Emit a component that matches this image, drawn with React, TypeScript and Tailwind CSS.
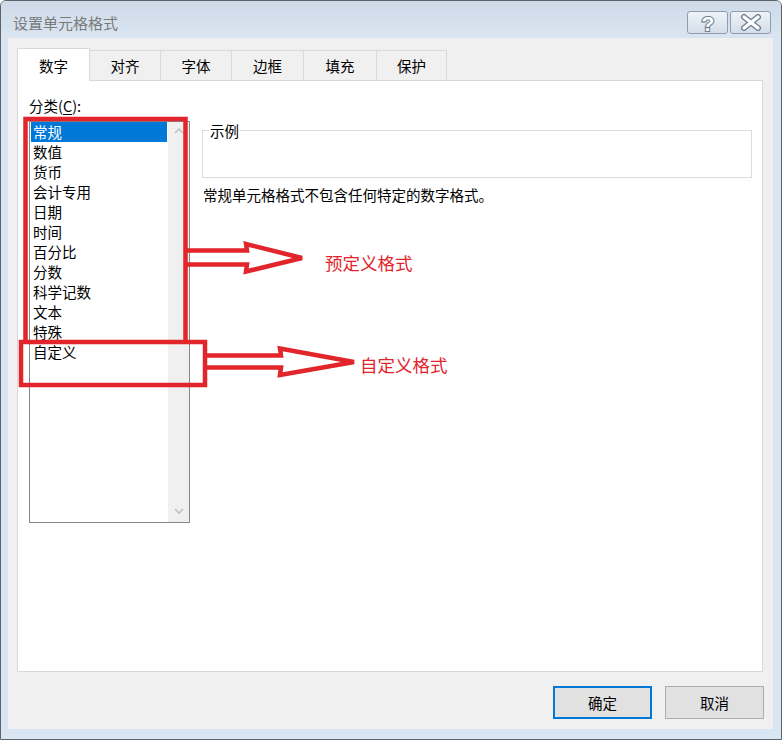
import React from 'react';

const tabs = [
  { label: '数字', w: 'w-[73px]' },
  { label: '对齐', w: 'w-[71px]' },
  { label: '字体', w: 'w-[71px]' },
  { label: '边框', w: 'w-[72px]' },
  { label: '填充', w: 'w-[73px]' },
  { label: '保护', w: 'w-[70px]' },
];

const categories = ['常规', '数值', '货币', '会计专用', '日期', '时间', '百分比', '分数', '科学记数', '文本', '特殊', '自定义'];

function HelpButton() {
  return (
    <div className="w-[41px] h-[23px] rounded-[3px] border border-[#8e9db0] bg-gradient-to-b from-[#eef3f8] to-[#d3deea] flex items-center justify-center">
      <svg width="18" height="22" viewBox="0 0 18 22">
        <text
          x="9"
          y="18.5"
          textAnchor="middle"
          fontSize="21"
          fontWeight="bold"
          fontFamily="Liberation Sans, sans-serif"
          fill="#ffffff"
          stroke="#6f7f91"
          strokeWidth="2.2"
          paintOrder="stroke"
        >
          ?
        </text>
      </svg>
    </div>
  );
}

function CloseButton() {
  return (
    <div className="w-[41px] h-[23px] rounded-[3px] border border-[#8e9db0] bg-gradient-to-b from-[#eef3f8] to-[#d3deea] flex items-center justify-center">
      <svg width="22" height="17" viewBox="0 0 22 17">
        <path d="M4 3 L18 14 M18 3 L4 14" stroke="#6f7f91" strokeWidth="6" strokeLinecap="round" />
        <path d="M4 3 L18 14 M18 3 L4 14" stroke="#ffffff" strokeWidth="3.4" strokeLinecap="round" />
      </svg>
    </div>
  );
}

function Chevron({ up }: { up?: boolean }) {
  return (
    <svg width="10" height="6" viewBox="0 0 10 6">
      <path d={up ? 'M1 5 L5 1 L9 5' : 'M1 1 L5 5 L9 1'} fill="none" stroke="#c0c0c0" strokeWidth="1.6" />
    </svg>
  );
}

function Annotations() {
  const red = '#e2242b';
  return (
    <>
      <svg className="absolute -left-px -top-px w-[782px] h-[740px] pointer-events-none" viewBox="0 0 782 740">
        <g fill="none" stroke={red} strokeWidth="4.5" strokeLinejoin="miter">
          <path d="M25.5 342 L25.5 119 L185.5 119 L185.5 342" />
          <rect x="21" y="342" width="184" height="43" />
          <path d="M187 250.5 L247 250.5 L246 244 L302 258 L246 271.5 L247 264.5 L187 264.5" />
          <path d="M207 355.5 L281 355.5 L280 348.5 L354 362 L280 375 L281 367.5 L207 367.5" />
        </g>
      </svg>
      <span className="absolute left-[324px] top-[250px] leading-[24px] text-[17.5px] text-[#e2242b] pointer-events-none">
        预定义格式
      </span>
      <span className="absolute left-[359px] top-[352px] leading-[24px] text-[17.5px] text-[#e2242b] pointer-events-none">
        自定义格式
      </span>
    </>
  );
}

export default function App() {
  return (
    <div className="relative w-[782px] h-[740px] flex flex-col border border-[#5b636d] rounded-t-[6px] bg-[#d9e5f2] font-['Noto_Sans_CJK_SC',sans-serif] text-[14.5px] text-black overflow-hidden">
      {/* Title bar */}
      <div className="h-[37px] flex justify-between bg-gradient-to-b from-[#cedae8] to-[#dae5f1]">
        <div className="pl-[12px] pt-[12px] leading-[20px] text-[15px] text-[#7a7a7a]">设置单元格格式</div>
        <div className="flex items-start gap-[2px] pt-[10px] pr-[10px]">
          <HelpButton />
          <CloseButton />
        </div>
      </div>

      {/* Dialog body */}
      <div className="ml-[7px] mr-[8px] mb-[10px] flex-1 flex flex-col bg-[#f0f0f0]">
        {/* Tabs */}
        <div className="relative z-10 flex items-end pl-[9px] pt-[10px]">
          {tabs.map((t, i) =>
            i === 0 ? (
              <div
                key={t.label}
                className={`${t.w} h-[33px] border border-b-0 border-[#d9d9d9] bg-white flex items-center justify-center pt-[2px]`}
              >
                {t.label}
              </div>
            ) : (
              <div
                key={t.label}
                className={`${t.w} h-[30px] mb-px border-t border-r border-[#d9d9d9] bg-[#f0f0f0] flex items-center justify-center pt-px`}
              >
                {t.label}
              </div>
            )
          )}
        </div>

        {/* Tab panel */}
        <div className="-mt-px ml-[9px] w-[746px] h-[592px] border border-[#d9d9d9] bg-white flex items-start">
          <div className="pl-[11px] pt-[15px]">
            <div className="leading-[20px]">
              分类(<span className="underline underline-offset-2">C</span>):
            </div>
            <div className="mt-[5px] w-[161px] h-[402px] border border-[#828790] bg-white flex">
              <div className="pl-px w-[138px]">
                {categories.map((c, i) => (
                  <div
                    key={c}
                    className={`w-[136px] h-[20px] leading-[20px] px-[2px] ${i === 0 ? 'bg-[#0078d7] text-white' : ''}`}
                  >
                    {c}
                  </div>
                ))}
              </div>
              <div className="w-[21px] bg-[#f0f0f0] flex flex-col justify-between">
                <div className="h-[17px] flex items-center justify-center">
                  <Chevron up />
                </div>
                <div className="h-[22px] flex items-center justify-center">
                  <Chevron />
                </div>
              </div>
            </div>
          </div>

          <div className="ml-[12px] pt-[49px]">
            <div className="relative w-[550px] h-[48px] border border-[#dcdcdc]">
              <span className="absolute left-[6px] -top-[10px] leading-[20px] bg-white px-[1px]">示例</span>
            </div>
            <div className="mt-[7px] ml-px leading-[20px]">常规单元格格式不包含任何特定的数字格式。</div>
          </div>
        </div>

        {/* Buttons */}
        <div className="mt-[14px] pr-[9px] flex justify-end gap-[13px]">
          <button className="w-[99px] h-[33px] border-2 border-[#0078d7] bg-[#e1e1e1] flex items-center justify-center">
            确定
          </button>
          <button className="w-[99px] h-[33px] border border-[#adadad] bg-[#e1e1e1] flex items-center justify-center">
            取消
          </button>
        </div>
      </div>

      <Annotations />
    </div>
  );
}
